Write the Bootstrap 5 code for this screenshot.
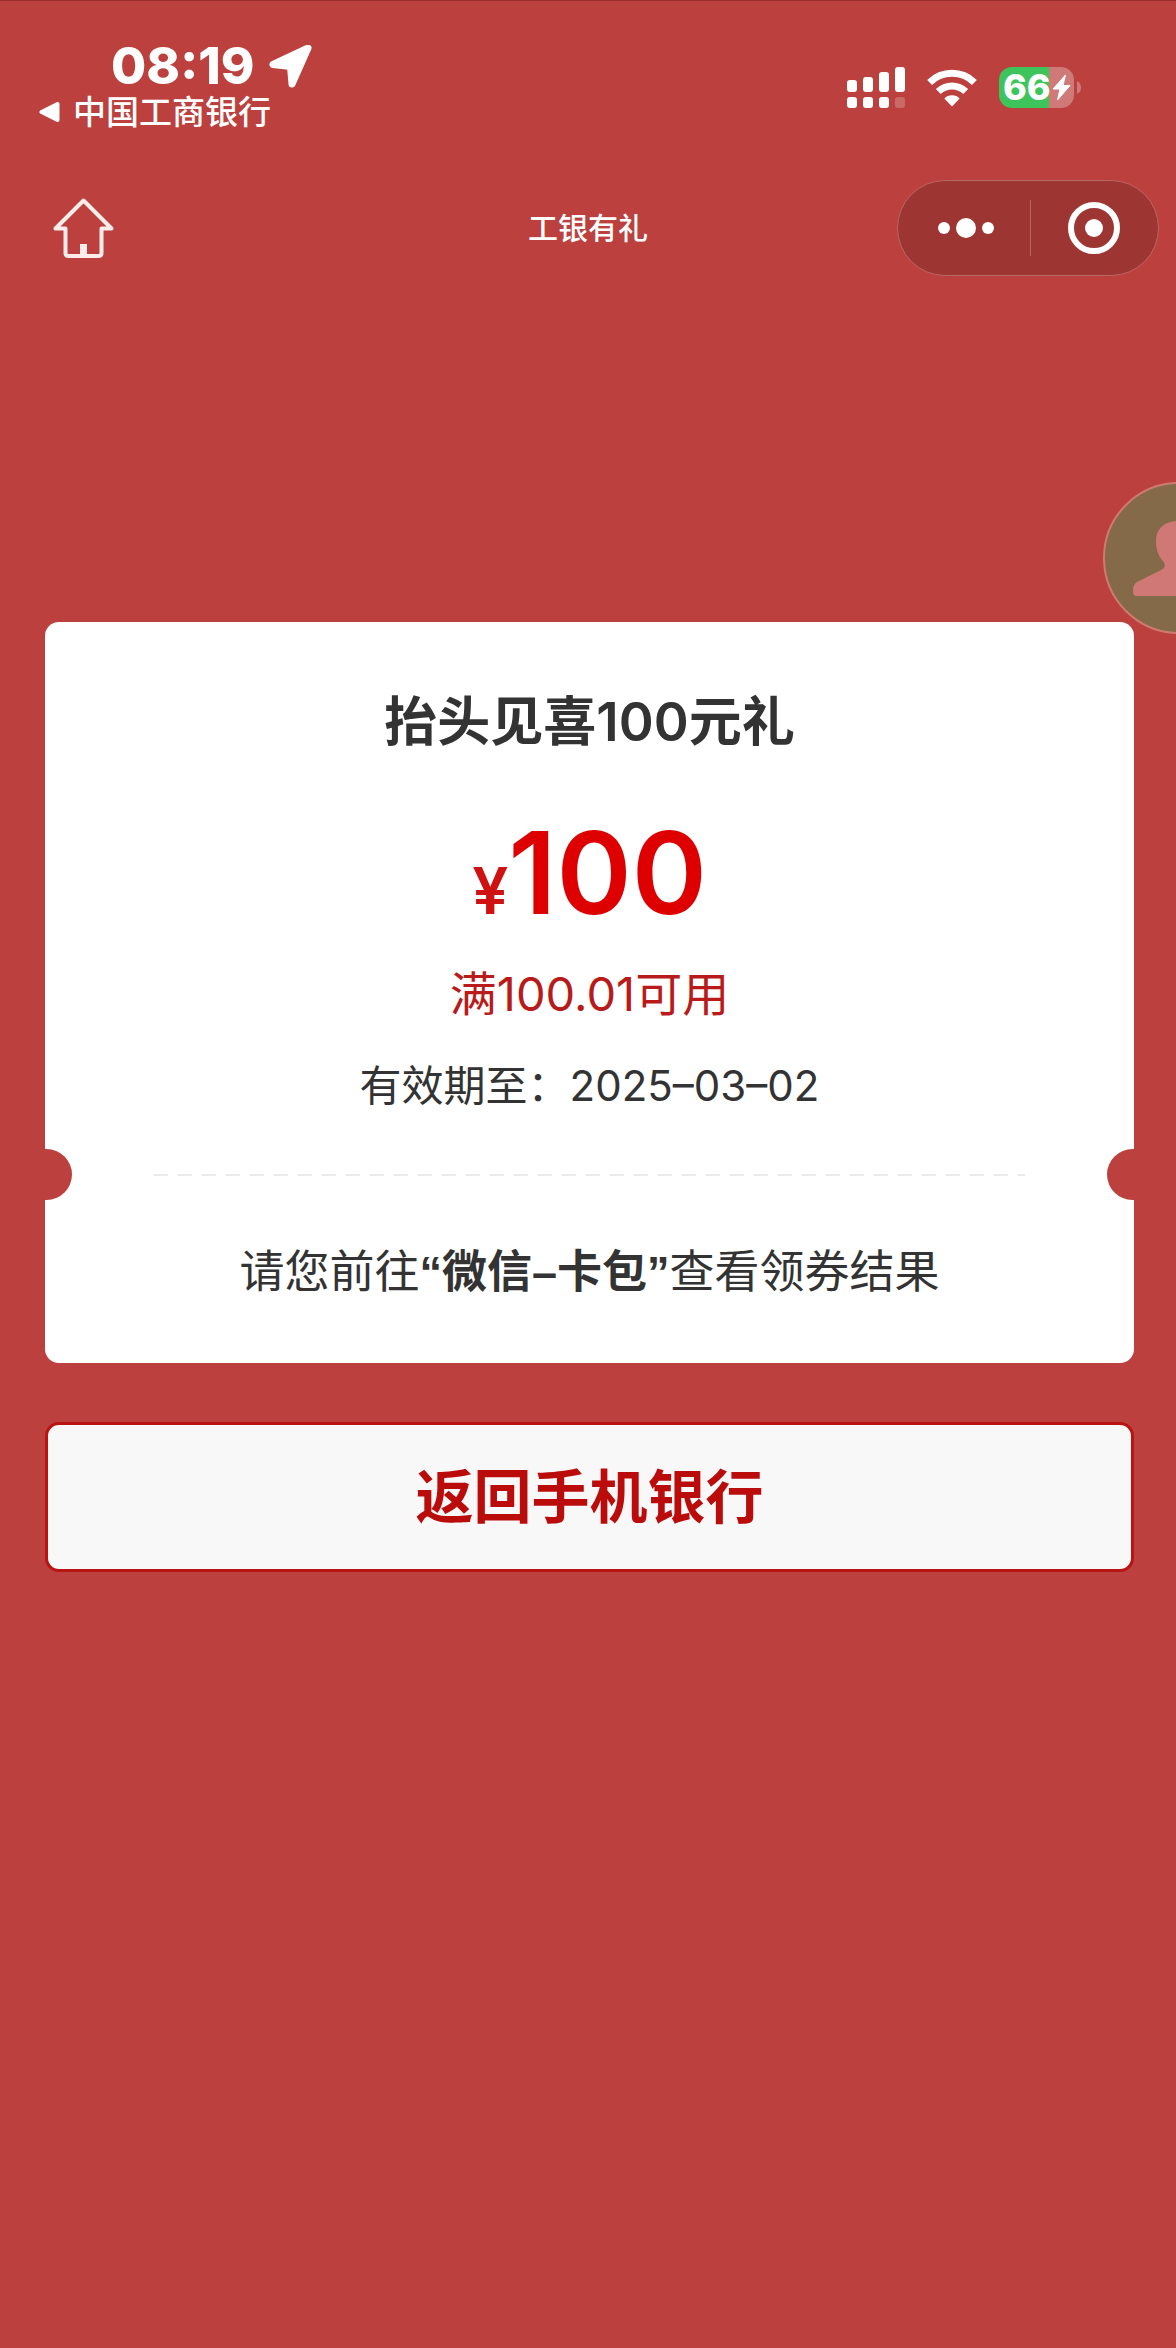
<!DOCTYPE html>
<html lang="zh-CN">
<head>
<meta charset="utf-8">
<meta name="viewport" content="width=device-width, initial-scale=1">
<title>工银有礼</title>
<link href="https://cdn.jsdelivr.net/npm/bootstrap@5.3.0/dist/css/bootstrap.min.css" rel="stylesheet">
<style>
  body { background: #bc403d; color: #333; font-family: Inter, "Noto Sans CJK SC", sans-serif; }
  svg { display: block; }
  .page-wrap { border-top: 1px solid #9b2f2e; overflow: hidden; }
  .status-bar { padding: 39px 95px 0 39px; }
  .clock-row { height: 52px; padding-left: 72px; gap: 15px; }
  .clock { font-size: 51px; line-height: 50px; font-weight: 800; }
  .back-link { font-size: 33px; line-height: 40px; font-weight: 500; gap: 13px; }
  .status-icons { margin-top: 27px; }
  .status-icons .gap-icon { margin-right: 22px; }
  .battery { width: 75px; height: 41px; border-radius: 13px; background: linear-gradient(90deg, #3dc55b 50px, #cf7a78 50px); font-size: 36px; line-height: 41px; font-weight: 800; padding-left: 4px; }
  .app-bar { margin-top: 48px; padding: 0 17px; }
  .app-title { font-size: 30px; line-height: 40px; font-weight: 500; }
  .side { flex: 1 1 0; }
  .home-link { margin-left: 36px; }
  .capsule { width: 262px; height: 96px; border: 1px solid #bb6765; border-radius: 48px; background: #9d3532; }
  .capsule button { background: none; border: 0; padding: 0; display: flex; align-items: center; justify-content: center; height: 94px; flex: 1; }
  .capsule .rule { width: 1px; height: 56px; background: #bb6765; }
  .main-area { padding: 346px 42px 0 45px; }
  .helper { position: absolute; top: 206px; right: 0; width: 73px; height: 152px; overflow: hidden; background: none; border: 0; padding: 0; }
  .ticket { border-radius: 14px; padding: 60px 0; }
  .ticket-title { font-size: 53px; line-height: 80px; font-weight: 600; }
  .price { font-size: 114px; line-height: 116px; font-weight: 600; color: #de0000; margin-top: 53px; }
  .price small { font-size: 64px; line-height: 1; font-weight: 600; color: #cf1111; }
  .limit { font-size: 47px; line-height: 60px; color: #b91a1a; margin-top: 33px; }
  .expiry { font-size: 42px; line-height: 60px; margin-top: 32px; }
  .tear { height: 51px; margin-top: 33px; padding: 0 109px; }
  .tear::before, .tear::after { content: ""; position: absolute; top: 0; width: 51px; height: 51px; border-radius: 50%; background: #bc403d; }
  .tear::before { left: -24px; }
  .tear::after { right: -24px; }
  .dashes { height: 2px; background: repeating-linear-gradient(90deg, #ebebeb 0 14px, transparent 14px 24px); }
  .notice { font-size: 45px; line-height: 60px; margin-top: 42px; }
  .notice strong { font-family: "Liberation Sans", "Noto Sans CJK SC", sans-serif; font-weight: 700; }
  .btn-return { margin-top: 59px; height: 150px; border: 3px solid #b81414; border-radius: 14px; background: #f8f8f8; color: #bb0c0c; font-size: 58px; line-height: 80px; font-weight: 600; }
  .btn-return:hover { background: #fff; color: #bb0c0c; border-color: #b81414; }
</style>
</head>
<body>
<div class="page-wrap min-vh-100">
  <div class="status-bar d-flex justify-content-between align-items-start text-white">
    <div>
      <div class="clock-row d-flex align-items-center">
        <span class="clock">08:19</span>
        <svg width="43" height="43" viewBox="0 0 43 43"><path d="M39 3 4 19.500 21.500 21.500 23 39Z" fill="#fff" stroke="#fff" stroke-width="7" stroke-linejoin="round"/></svg>
      </div>
      <a href="#" class="back-link d-flex align-items-center text-white text-decoration-none">
        <svg width="21" height="22" viewBox="0 0 21 22"><path d="M2.500 11 18.500 3v16Z" fill="#fff" stroke="#fff" stroke-width="4" stroke-linejoin="round"/></svg>
        <span>中国工商银行</span>
      </a>
    </div>
    <div class="status-icons d-flex align-items-center">
      <svg width="58" height="41" viewBox="0 0 58 41" fill="#fff" class="gap-icon"><rect y="13" width="10" height="12" rx="3"/><rect x="16" y="10" width="10" height="15" rx="3"/><rect x="32" y="5" width="10" height="20" rx="3"/><rect x="48" width="10" height="25" rx="3"/><rect y="30" width="10" height="11" rx="3"/><rect x="16" y="30" width="10" height="11" rx="3"/><rect x="32" y="30" width="10" height="11" rx="3"/><rect x="48" y="30" width="10" height="11" rx="3" opacity=".22"/></svg>
      <svg width="50" height="38" viewBox="0 0 50 38" fill="none" stroke="#fff" stroke-width="7" class="gap-icon"><path d="M2.600 13.500a32 32 0 0 1 44.800 0M11.300 22.500a19.500 19.500 0 0 1 27.400 0"/><path d="M25 37.500 17.300 29.500a11 11 0 0 1 15.400 0Z" fill="#fff" stroke="none"/></svg>
      <div class="battery d-flex align-items-center"><span>66</span><svg width="21" height="27" viewBox="0 0 21 27"><path d="M14.500 1 2 15h7L6.500 26 19 11.500h-7Z" fill="#fff" stroke="#fff" stroke-linejoin="round"/></svg></div>
      <svg width="7" height="13" viewBox="0 0 7 13"><path d="M3 0q4 2 4 6.500T3 13Z" fill="#cf7a78"/></svg>
    </div>
  </div>

  <header class="app-bar d-flex align-items-center text-white">
    <div class="side d-flex">
      <a href="#" class="home-link" aria-label="首页"><svg width="61" height="60" viewBox="0 0 61 60" fill="none" stroke="#ffeceb" stroke-width="4" stroke-linejoin="round"><path d="M30.500 2.500 2.500 30.500h10V55q0 3 3 3h30q3 0 3-3V30.500h10Z"/><path d="M30.500 46v11" stroke-width="7"/></svg></a>
    </div>
    <div class="app-title">工银有礼</div>
    <div class="side d-flex justify-content-end">
      <div class="capsule d-flex align-items-center">
        <button type="button" class="ps-1" aria-label="更多"><svg width="56" height="20" viewBox="0 0 56 20" fill="#fff"><circle cx="6" cy="10" r="6"/><circle cx="28" cy="10" r="10"/><circle cx="50" cy="10" r="6"/></svg></button>
        <span class="rule"></span>
        <button type="button" aria-label="关闭"><svg width="52" height="52" viewBox="0 0 52 52"><circle cx="26" cy="26" r="23" fill="none" stroke="#fff" stroke-width="6"/><circle cx="26" cy="26" r="9" fill="#fff"/></svg></button>
      </div>
    </div>
  </header>

  <main class="main-area position-relative">
    <button type="button" class="helper" aria-label="客服"><svg width="152" height="152" viewBox="0 0 152 152"><circle cx="76" cy="76" r="75" fill="#856a4a" stroke="#cf7a70" stroke-width="2"/><path d="M76 39c-15 0-23 8-23 20 0 9 3 16 7 20 3 4 2 7-2 9L36 99c-5 2-6 6-6 10 0 3 1 5 4 5h84c3 0 4-2 4-5 0-4-1-8-6-10L94 88c-4-2-5-5-2-9 4-4 7-11 7-20 0-12-8-20-23-20Z" fill="#cf7875"/></svg></button>
    <section class="ticket bg-white text-center">
      <h1 class="ticket-title mb-0">抬头见喜100元礼</h1>
      <div class="price"><small>¥</small>100</div>
      <div class="limit">满100.01可用</div>
      <div class="expiry">有效期至：2025–03–02</div>
      <div class="tear position-relative d-flex align-items-center overflow-hidden"><div class="dashes flex-fill"></div></div>
      <p class="notice mb-0">请您前往<strong>“微信–卡包”</strong>查看领券结果</p>
    </section>
    <button type="button" class="btn btn-return w-100">返回手机银行</button>
  </main>
</div>
<script src="https://cdn.jsdelivr.net/npm/bootstrap@5.3.0/dist/js/bootstrap.bundle.min.js"></script>
</body>
</html>
